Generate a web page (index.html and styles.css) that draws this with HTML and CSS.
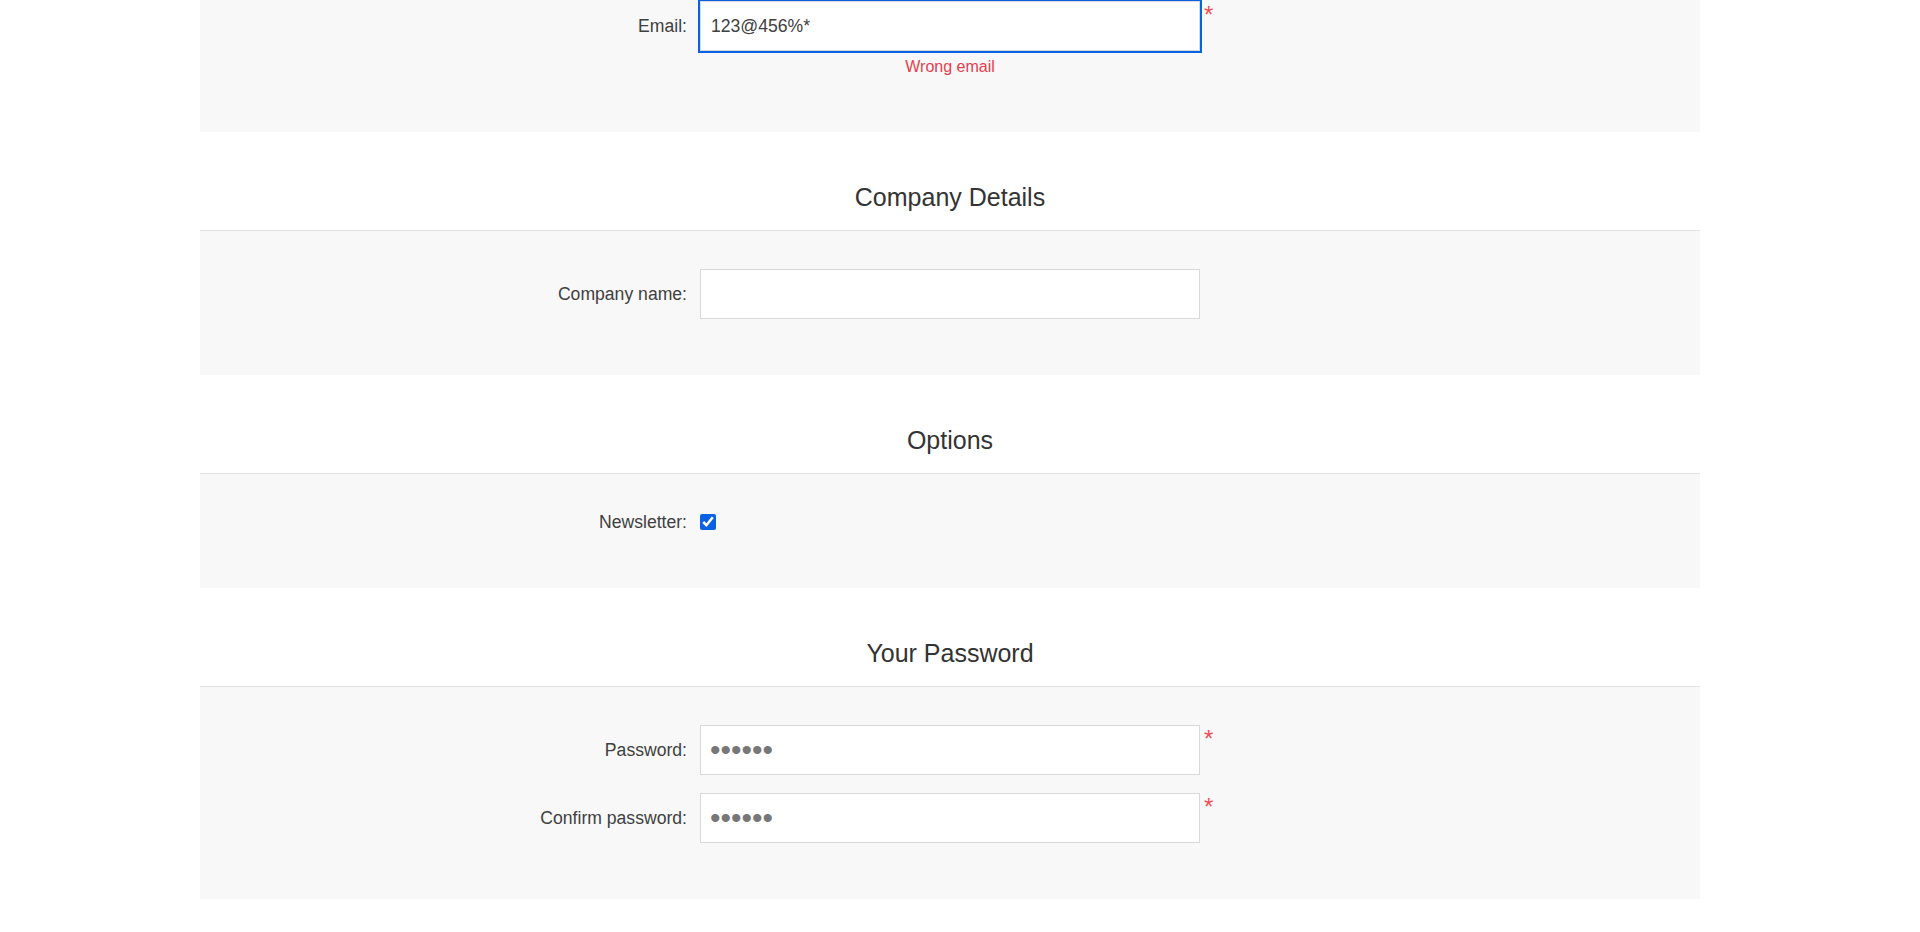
FILE: index.html
```html
<!DOCTYPE html>
<html lang="en">
<head>
<meta charset="utf-8">
<title>Registration form</title>
<link rel="stylesheet" href="styles.css">
</head>
<body>
<div class="page">
  <section class="section section-first">
    <div class="panel panel-first">
      <div class="row">
        <label class="label" for="email">Email:</label>
        <div class="field">
          <input class="input input-focus" id="email" type="text" value="123@456%*">
          <div class="error">Wrong email</div>
        </div>
        <span class="req">*</span>
      </div>
    </div>
  </section>

  <section class="section">
    <h2 class="title">Company Details</h2>
    <div class="panel">
      <div class="row">
        <label class="label" for="company">Company name:</label>
        <div class="field">
          <input class="input" id="company" type="text" value="">
        </div>
      </div>
    </div>
  </section>

  <section class="section">
    <h2 class="title">Options</h2>
    <div class="panel">
      <div class="row row-check">
        <label class="label label-short" for="newsletter">Newsletter:</label>
        <div class="field">
          <input class="check" id="newsletter" type="checkbox" checked>
        </div>
      </div>
    </div>
  </section>

  <section class="section">
    <h2 class="title">Your Password</h2>
    <div class="panel">
      <div class="row">
        <label class="label" for="pw">Password:</label>
        <div class="field">
          <input class="input input-pw" id="pw" type="password" value="123456">
        </div>
        <span class="req">*</span>
      </div>
      <div class="row">
        <label class="label" for="pw2">Confirm password:</label>
        <div class="field">
          <input class="input input-pw" id="pw2" type="password" value="123456">
        </div>
        <span class="req">*</span>
      </div>
    </div>
  </section>
</div>
</body>
</html>
```

FILE: styles.css
```css
html, body {
  margin: 0;
  padding: 0;
  background: #ffffff;
}

body {
  font-family: "Liberation Sans", Arial, sans-serif;
  font-size: 17.6px;
  color: #404040;
}

.page {
  padding: 0 220px 0 200px;
}

.title {
  margin: 0;
  padding: 50px 0 18px;
  font-size: 25px;
  line-height: 30px;
  font-weight: normal;
  text-align: center;
  color: #333333;
  border-bottom: 1px solid #e2e2e2;
}

.panel {
  background: #f8f8f8;
  padding: 38px 0 38px;
}

.panel-first {
  padding-top: 1px;
}

.row {
  display: grid;
  grid-template-columns: 500px 500px auto;
  align-items: start;
  margin-bottom: 18px;
}

.label {
  text-align: right;
  padding-right: 13px;
  line-height: 50px;
  color: #404040;
}

.row-check {
  align-items: center;
}

.label-short {
  line-height: 20px;
}

.field {
  display: flex;
  flex-direction: column;
}

.input {
  box-sizing: border-box;
  width: 500px;
  height: 50px;
  margin: 0;
  padding: 0 10px;
  border: 1px solid #d9d9d9;
  border-radius: 0;
  background: #ffffff;
  font-family: "Liberation Sans", Arial, sans-serif;
  font-size: 17.6px;
  color: #404040;
  outline: none;
}

.input-pw {
  font-size: 30px;
  color: #777777;
  padding-left: 9px;
}

.input-focus {
  outline: 2px solid #0b61e3;
  outline-offset: 0;
}

.error {
  margin-top: 6px;
  font-size: 16px;
  line-height: 19px;
  text-align: center;
  color: #e5404e;
}

.check {
  width: 16px;
  height: 16px;
  margin: 0;
  accent-color: #0b61e3;
}

.req {
  margin: 3px 0 0 4px;
  font-size: 24px;
  line-height: 22px;
  color: #e8505b;
}
```
